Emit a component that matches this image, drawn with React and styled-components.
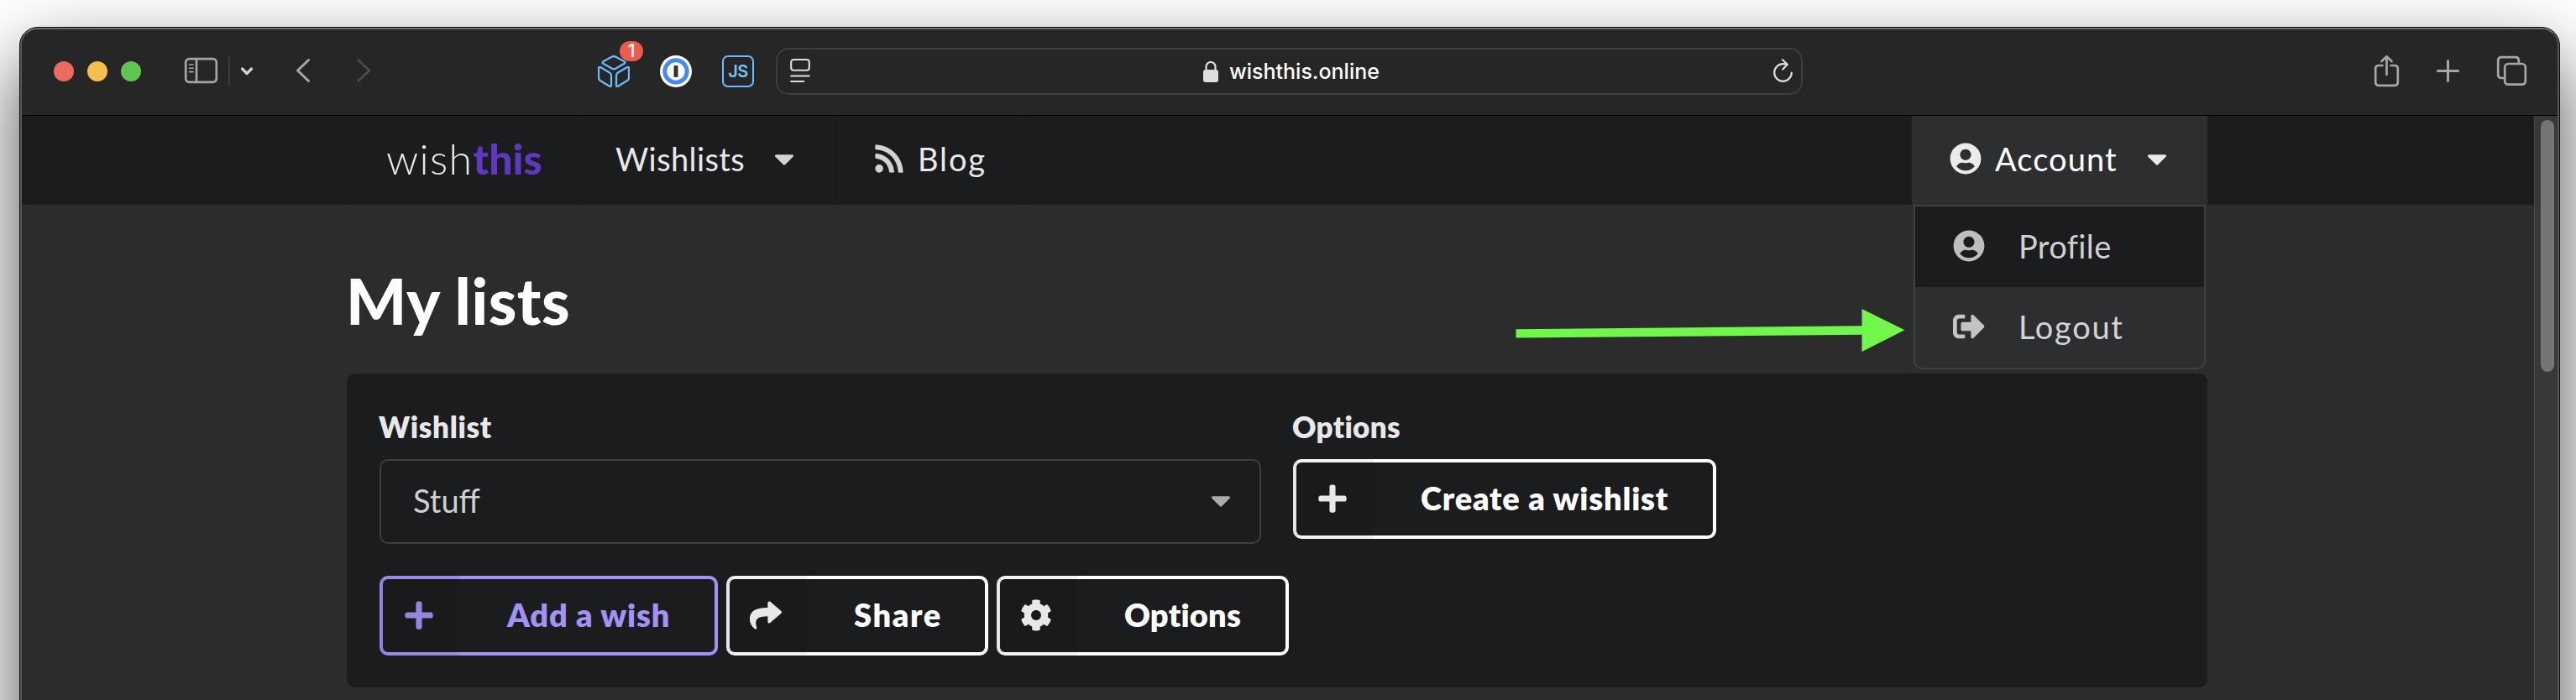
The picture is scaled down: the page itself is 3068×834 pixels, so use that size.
import React from 'react';
import styled, { createGlobalStyle } from 'styled-components';
import {
  FaCaretDown,
  FaCog,
  FaPlus,
  FaRss,
  FaShare,
  FaSignOutAlt,
  FaUserCircle,
} from 'react-icons/fa';

const GlobalStyle = createGlobalStyle`
  *, *::before, *::after { box-sizing: border-box; }
  body {
    margin: 0;
    background: #fff;
    font-family: Lato, "Liberation Sans", sans-serif;
    font-size: 38px;
    overflow: hidden;
  }
  svg { display: block; flex: none; }
`;

const Desktop = styled.div`
  position: relative;
  height: 834px;
  padding: 32px 19px 0 23px;
  overflow: hidden;
  background: #fff;
`;

const Window = styled.div`
  height: 1500px;
  border: 1px solid #0c0c0c;
  border-radius: 22px;
  background: #2c2c2c;
  box-shadow: 0 40px 90px rgba(0, 0, 0, 0.7);
`;

const Frame = styled.div`
  height: 100%;
  border: 2px solid #565656;
  border-top-color: #6b6b6b;
  border-radius: 21px;
  overflow: hidden;
`;

/* Browser toolbar */

const Toolbar = styled.header`
  display: flex;
  align-items: center;
  height: 103px;
  padding: 0 37px 2px 38px;
  background: #262626;
  border-bottom: 1px solid #000;
  color: #a6a6a6;
`;

const Lights = styled.div`
  display: flex;
  gap: 16px;
`;

const Light = styled.span`
  width: 24px;
  height: 24px;
  border-radius: 50%;
  background: ${(p) => p.$color};
`;

const ToolIcon = styled.svg`
  width: ${(p) => p.$w}px;
  height: ${(p) => p.$h}px;
  margin: 0 0 2px ${(p) => p.$gap}px;
  fill: none;
  stroke: ${(p) => p.$color || 'currentColor'};
  stroke-width: ${(p) => p.$stroke || 2.7};
  stroke-linecap: round;
  stroke-linejoin: round;
  overflow: visible;
`;

const ToolDivider = styled.span`
  width: 2px;
  height: 36px;
  margin-left: 13px;
  background: #3a3a3a;
`;

const Extension = styled.div`
  position: relative;
  display: flex;
  width: 38px;
  height: 38px;
  margin-left: ${(p) => p.$gap || 36}px;
`;

const Badge = styled.span`
  position: absolute;
  left: 26px;
  top: -17px;
  width: 28px;
  height: 24px;
  border-radius: 12px;
  background: #eb5c4e;
  color: #fff;
  font: 500 21px/24px Inter, "Liberation Sans", sans-serif;
  text-align: center;
`;

const ScriptTile = styled.span`
  width: 38px;
  height: 38px;
  border: 2px solid #6dbcfb;
  border-radius: 7px;
  color: #7cc4fb;
  font: 600 20px/34px Inter, "Liberation Sans", sans-serif;
  letter-spacing: -0.5px;
  text-align: center;
`;

const AddressBar = styled.div`
  display: flex;
  align-items: center;
  width: 1223px;
  height: 56px;
  margin-left: 26px;
  padding: 0 10px 0 15px;
  border: 2px solid #3e3e3e;
  border-radius: 15px;
  color: #dedede;
`;

const Host = styled.div`
  display: flex;
  flex: 1;
  align-items: center;
  gap: 13px;
  padding-left: 468px;
  color: #fff;
  font: 500 25px/30px Inter, "Liberation Sans", sans-serif;
`;

/* Page */

const Viewport = styled.div`
  display: flex;
  height: 1400px;
`;

const Page = styled.div`
  flex: 1;
  background: #2c2c2c;
`;

const Scrollbar = styled.div`
  width: 28px;
  padding: 5px 4px 0 7px;
  border-left: 1px solid #484848;
  background: #383838;
`;

const Thumb = styled.div`
  height: 300px;
  border-radius: 8px;
  background: #757575;
`;

const Navbar = styled.nav`
  height: 106px;
  padding-left: 387px;
  background: #1b1c1d;
`;

const NavItems = styled.div`
  display: flex;
  width: 2216px;
  height: 106px;
  border-left: 1px solid #1d1e1f;
`;

const NavItem = styled.div`
  position: relative;
  display: flex;
  align-items: center;
  width: ${(p) => p.$w}px;
  padding: 0 0 4px ${(p) => p.$pad}px;
  border-right: ${(p) => (p.$active ? 0 : '2px solid #1d1e1f')};
  margin-left: ${(p) => (p.$active ? 'auto' : 0)};
  background: ${(p) => (p.$active ? '#2d2e2f' : 'transparent')};
  color: ${(p) => (p.$active ? '#fff' : '#e8e8e8')};
  letter-spacing: ${(p) => p.$track || 0}px;
  white-space: nowrap;

  svg {
    color: ${(p) => (p.$active ? '#ebebeb' : '#d3d3d3')};
  }
  svg:last-of-type {
    margin-left: ${(p) => (p.$caret ? 28 : 0)}px;
  }
`;

const NavText = styled.span`
  margin-left: ${(p) => (p.$gap ? p.$gap : 0)}px;
`;

const Logo = styled.span`
  font-size: 50px;
  font-weight: 300;
  line-height: 60px;
  letter-spacing: 1.3px;

  b {
    font-weight: 900;
    letter-spacing: 0;
    color: #5d38c0;
  }
`;

const Menu = styled.div`
  position: absolute;
  z-index: 2;
  top: 106px;
  left: 2px;
  width: 348px;
  height: 196px;
  border: 2px solid #3f4041;
  border-radius: 0 0 10px 10px;
  overflow: hidden;
`;

const MenuRow = styled.div`
  display: flex;
  align-items: center;
  gap: 40px;
  height: 96px;
  padding: 0 0 3px 45px;
  background: ${(p) => (p.$hover ? '#2d2e2f' : '#1b1c1d')};
  color: ${(p) => (p.$hover ? '#d4d4d4' : '#d0d0d0')};
  letter-spacing: ${(p) => p.$track}px;

  && svg {
    margin: 0;
    color: ${(p) => (p.$hover ? '#c4c4c4' : '#bebebe')};
  }
`;

const Content = styled.main`
  width: 2216px;
  margin-left: 387px;
  padding-top: 68px;
`;

const Title = styled.h1`
  margin: 0 0 41px -1px;
  font-size: 76px;
  font-weight: 900;
  line-height: 92px;
  letter-spacing: 0.5px;
  color: #fff;
`;

const Card = styled.section`
  height: 374px;
  padding: 42px 39px 0;
  border-radius: 10px;
  background: #1b1c1d;
`;

const Fields = styled.div`
  display: flex;
  gap: 38px;
  height: 199px;
`;

const Field = styled.div`
  width: ${(p) => p.$w}px;
`;

const Label = styled.div`
  margin: 0 0 18px -1px;
  font-size: 35px;
  font-weight: 800;
  line-height: 42px;
  letter-spacing: ${(p) => p.$track}px;
  color: #e8e8e8;
`;

const Select = styled.div`
  display: flex;
  align-items: center;
  justify-content: space-between;
  height: 101px;
  padding: 0 27px 4px 38px;
  border: 2px solid #3d3e3f;
  border-radius: 10px;
  color: #cfd0d0;

  svg { color: #ababac; margin-bottom: -1px; }
`;

const Actions = styled.div`
  display: flex;
  gap: 10px;
`;

const ActionButton = styled.button`
  display: flex;
  align-items: center;
  width: ${(p) => p.$w}px;
  height: 95px;
  padding: 0;
  border: 4px solid ${(p) => p.$color || '#fff'};
  border-left-color: ${(p) => (p.$color ? '#9a8aeb' : '#f3f3f3')};
  border-radius: 10px;
  background: transparent;
  color: ${(p) => p.$color || '#fff'};
  font: 800 38px/46px Lato, "Liberation Sans", sans-serif;
  letter-spacing: ${(p) => p.$track}px;
  white-space: nowrap;
`;

const ButtonIcon = styled.span`
  display: flex;
  align-items: center;
  justify-content: center;
  width: 96px;
  height: 95px;
  margin-left: -4px;
  padding: 0 2px 1px 0;
  background: rgba(0, 0, 0, 0.05);
  border-radius: 10px 0 0 10px;
  color: ${(p) => p.$color || '#e8e8e8'};
`;

const ButtonText = styled.span`
  padding: 0 0 3px 56px;
`;

const Pointer = styled.svg`
  position: absolute;
  z-index: 3;
  left: 1805px;
  top: 368px;
  width: 464px;
  height: 52px;
`;

const Action = ({ icon: Icon, width, color, iconColor, track, children }) => (
  <ActionButton $w={width} $color={color} $track={track}>
    <ButtonIcon $color={iconColor}>
      <Icon size={38} />
    </ButtonIcon>
    <ButtonText>{children}</ButtonText>
  </ActionButton>
);

const BrowserToolbar = () => (
  <Toolbar>
    <Lights>
      <Light $color="#ed6a5e" />
      <Light $color="#f5bf4f" />
      <Light $color="#61c554" />
    </Lights>
    <ToolIcon $w={39} $h={30} $gap={52} viewBox="0 0 39 30">
      <rect x="1.2" y="1.2" width="36.6" height="27.6" rx="4" />
      <path d="M14 1.5v27" />
      <path d="M5.5 8h4.5M5.5 12.3h4.5M5.5 16.6h4.5" strokeWidth="1.6" />
    </ToolIcon>
    <ToolDivider />
    <ToolIcon $w={14} $h={9} $gap={13} $stroke={3.2} $color="#d4d4d4" viewBox="0 0 14 9">
      <path d="M1.5 2l5.5 5.5L12.500 2" />
    </ToolIcon>
    <ToolIcon $w={16} $h={28} $gap={52} $stroke={3} viewBox="0 0 16 28">
      <path d="M14.500 1.500L1.500 14l13 12.500" />
    </ToolIcon>
    <ToolIcon $w={16} $h={28} $gap={56} $stroke={3} $color="#4a4a4a" viewBox="0 0 16 28">
      <path d="M1.500 1.500L15 14L1.500 26.500" />
    </ToolIcon>
    <Extension $gap={271}>
      <svg width="38" height="38" viewBox="0 0 38 38" fill="none" stroke="#6db9fb" strokeWidth="2.3" strokeLinejoin="round">
        <path d="M17 1.600q2-1 4 0l10.500 5.600q1.800 1.300 0 2.600L21 15.800q-2 1-4 0L6.500 9.800q-1.800-1.300 0-2.600z" />
        <path d="M3.500 14.200l10.500 6.300q2 1.300 2 3.500v11.500q0 2.300-2 1.200L3.300 30.300Q1 29 1 26.500V15.500q0-2.300 2.500-1.300z" />
        <path d="M34.500 14.200L24 20.500q-2 1.300-2 3.500v11.500q0 2.300 2 1.200l10.700-6.400Q37 29 37 26.500V15.500q0-2.300-2.500-1.300z" />
      </svg>
      <Badge>1</Badge>
    </Extension>
    <Extension>
      <svg width="38" height="38" viewBox="0 0 38 38">
        <circle cx="19" cy="19" r="19" fill="#fff" />
        <circle cx="19" cy="19" r="13.200" fill="#fff" stroke="#4489f7" strokeWidth="5" />
        <rect x="16.500" y="12" width="5" height="14" rx="1" fill="#333" />
      </svg>
    </Extension>
    <Extension>
      <ScriptTile>JS</ScriptTile>
    </Extension>
    <AddressBar>
      <ToolIcon $w={24} $h={28} $gap={0} $stroke={2.1} viewBox="0 0 24 28">
        <rect x="1.200" y="1" width="21.600" height="12.800" rx="3" />
        <path d="M1.200 20.500h21.600M1.200 27h15" />
      </ToolIcon>
      <Host>
        <svg width="18" height="25" viewBox="0 0 18 25">
          <path d="M3.500 11V6.500a5.500 5.500 0 0 1 11 0V11" fill="none" stroke="#dedede" strokeWidth="2.200" />
          <rect y="10" width="18" height="15" rx="3" fill="#dedede" />
        </svg>
        wishthis.online
      </Host>
      <ToolIcon $w={23} $h={28} $gap={0} $stroke={2.2} viewBox="0 0 23 28">
        <path d="M21.800 16.500A10.300 10.300 0 1 1 11.500 6.200q2.500 0 4.800.6M11 1.200l5.800 5.600L11.300 12.600" />
      </ToolIcon>
    </AddressBar>
    <ToolIcon $w={29} $h={37} $gap={681} viewBox="0 0 29 37">
      <path d="M9.500 12H5q-3.800 0-3.800 3.800v16.200q0 3.800 3.800 3.800h19q3.800 0 3.800-3.800V15.800q0-3.800-3.800-3.800h-4.500M14.500 23V1.500M8.500 7l6-5.800 6 5.800" />
    </ToolIcon>
    <ToolIcon $w={27} $h={27} $gap={45} $stroke={3} viewBox="0 0 27 27">
      <path d="M13.500 1.400v24.200M1.400 13.500h24.200" />
    </ToolIcon>
    <ToolIcon $w={35} $h={35} $gap={45} viewBox="0 0 35 35">
      <rect x="9.200" y="9" width="24.600" height="24.600" rx="4" />
      <path d="M9 26H5q-3.800 0-3.800-3.800V5Q1.200 1.200 5 1.200h17q3.800 0 3.800 3.800v4" />
    </ToolIcon>
  </Toolbar>
);

const SiteNav = () => (
  <Navbar>
    <NavItems>
      <NavItem $w={278} $pad={46}>
        <Logo>
          wish<b>this</b>
        </Logo>
      </NavItem>
      <NavItem $w={302} $pad={41} $track={0.4} $caret>
        <NavText>Wishlists</NavText>
        <FaCaretDown size={38} />
      </NavItem>
      <NavItem $w={224} $pad={46} $track={1.9}>
        <FaRss size={38} />
        <NavText $gap={15}>Blog</NavText>
      </NavItem>
      <NavItem $w={352} $pad={45} $track={1.09} $active $caret>
        <FaUserCircle size={38} />
        <NavText $gap={16}>Account</NavText>
        <FaCaretDown size={38} />
        <Menu>
          <MenuRow $track={0.35}>
            <FaUserCircle size={38} />
            Profile
          </MenuRow>
          <MenuRow $track={1.7} $hover>
            <FaSignOutAlt size={38} />
            Logout
          </MenuRow>
        </Menu>
      </NavItem>
    </NavItems>
  </Navbar>
);

const Lists = () => (
  <Content>
    <Title>My lists</Title>
    <Card>
      <Fields>
        <Field $w={1050}>
          <Label $track={0.7}>Wishlist</Label>
          <Select>
            Stuff
            <FaCaretDown size={38} />
          </Select>
        </Field>
        <Field $w={504}>
          <Label $track={0.3}>Options</Label>
          <Action icon={FaPlus} width={504} track={0.8}>
            Create a wishlist
          </Action>
        </Field>
      </Fields>
      <Actions>
        <Action icon={FaPlus} width={403} track={0.75} color="#a291f6" iconColor="#9485dd">
          Add a wish
        </Action>
        <Action icon={FaShare} width={312} track={1.6}>
          Share
        </Action>
        <Action icon={FaCog} width={348} track={0.2}>
          Options
        </Action>
      </Actions>
    </Card>
  </Content>
);

export default function App() {
  return (
    <Desktop>
      <GlobalStyle />
      <Window>
        <Frame>
          <BrowserToolbar />
          <Viewport>
            <Page>
              <SiteNav />
              <Lists />
            </Page>
            <Scrollbar>
              <Thumb />
            </Scrollbar>
          </Viewport>
        </Frame>
      </Window>
      <Pointer viewBox="0 0 464 52">
        <path d="M.5 24.200L412.500 20.300V0L463.500 25.300L412.500 51V30.800L.5 34.500z" fill="#71f64b" />
      </Pointer>
    </Desktop>
  );
}
